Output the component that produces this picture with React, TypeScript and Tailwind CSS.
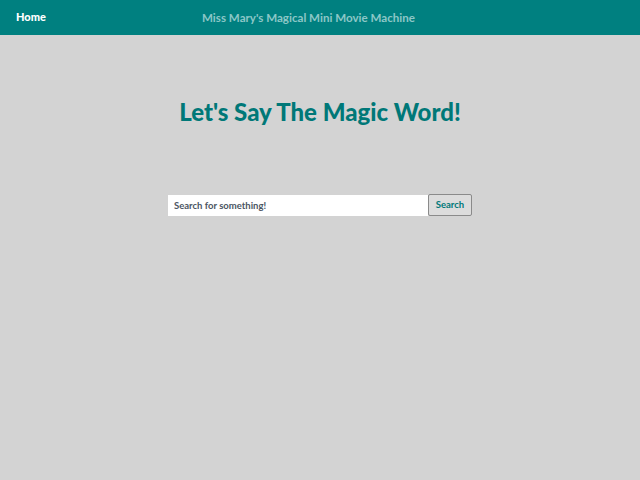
import React from 'react';

export default function App() {
  return (
    <div className="min-h-screen w-full bg-[#d3d3d3] font-['Lato',sans-serif]">
      {/* nav bar */}
      <nav className="flex h-[35px] items-center bg-[#008080]">
        <div className="w-[202px] pl-4 text-[11px] font-black text-white">Home</div>
        <div className="text-[11.6px] font-bold text-[#8cc7c7]">Miss Mary's Magical Mini Movie Machine</div>
      </nav>

      <main className="flex flex-col items-center">
        <h1 className="mt-[59px] text-[24px] font-black text-[#007878]">Let's Say The Magic Word!</h1>

        <form className="mt-[64px] flex items-center" onSubmit={(e) => e.preventDefault()}>
          <input
            type="text"
            placeholder="Search for something!"
            className="h-[21px] w-[260px] bg-white px-[6px] text-[9.5px] font-bold text-[#4b5563] placeholder:text-[#4b5563] outline-none"
          />
          <button
            type="submit"
            className="h-[22px] w-[44px] rounded-[2px] border border-[#8a8a8a] bg-[#dcdcdc] text-[9.5px] font-bold text-[#007878]"
          >
            Search
          </button>
        </form>
      </main>
    </div>
  );
}
